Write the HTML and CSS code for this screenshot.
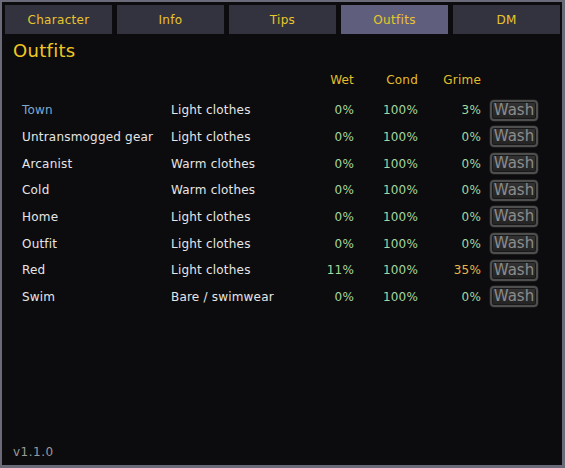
FILE: index.html
```html
<!DOCTYPE html>
<html>
<head>
<meta charset="utf-8">
<link rel="stylesheet" href="styles.css">
</head>
<body>
<div class="frame">
  <nav class="tabs">
    <div class="tab">Character</div>
    <div class="tab">Info</div>
    <div class="tab">Tips</div>
    <div class="tab active">Outfits</div>
    <div class="tab">DM</div>
  </nav>
  <h1 class="title">Outfits</h1>
  <div class="table">
    <div class="row head">
      <span></span><span></span>
      <span class="num">Wet</span><span class="num">Cond</span><span class="num">Grime</span><span></span>
    </div>
    <div class="row">
      <span class="name town">Town</span><span class="type">Light clothes</span>
      <span class="num val">0%</span><span class="num val">100%</span><span class="num val">3%</span><button class="wash">Wash</button>
    </div>
    <div class="row">
      <span class="name">Untransmogged gear</span><span class="type">Light clothes</span>
      <span class="num val">0%</span><span class="num val">100%</span><span class="num val">0%</span><button class="wash">Wash</button>
    </div>
    <div class="row">
      <span class="name">Arcanist</span><span class="type">Warm clothes</span>
      <span class="num val">0%</span><span class="num val">100%</span><span class="num val">0%</span><button class="wash">Wash</button>
    </div>
    <div class="row">
      <span class="name">Cold</span><span class="type">Warm clothes</span>
      <span class="num val">0%</span><span class="num val">100%</span><span class="num val">0%</span><button class="wash">Wash</button>
    </div>
    <div class="row">
      <span class="name">Home</span><span class="type">Light clothes</span>
      <span class="num val">0%</span><span class="num val">100%</span><span class="num val">0%</span><button class="wash">Wash</button>
    </div>
    <div class="row">
      <span class="name">Outfit</span><span class="type">Light clothes</span>
      <span class="num val">0%</span><span class="num val">100%</span><span class="num val">0%</span><button class="wash">Wash</button>
    </div>
    <div class="row">
      <span class="name">Red</span><span class="type">Light clothes</span>
      <span class="num val">11%</span><span class="num val">100%</span><span class="num warn">35%</span><button class="wash">Wash</button>
    </div>
    <div class="row">
      <span class="name">Swim</span><span class="type">Bare / swimwear</span>
      <span class="num val">0%</span><span class="num val">100%</span><span class="num val">0%</span><button class="wash">Wash</button>
    </div>
  </div>
  <div class="version">v1.1.0</div>
</div>
</body>
</html>
```
FILE: styles.css
```css
html, body {
  margin: 0;
  padding: 0;
  background: #6a6a78;
}
body {
  width: 565px;
  height: 468px;
  font-family: "DejaVu Sans", Verdana, sans-serif;
}
.frame {
  box-sizing: border-box;
  margin: 2px 3px 3px 2px;
  width: 560px;
  height: 463px;
  background: #0c0c0e;
  padding: 3px 3px 0 3px;
  display: flex;
  flex-direction: column;
}
.tabs {
  display: grid;
  grid-template-columns: repeat(5, 107px);
  gap: 5px;
}
.tab {
  height: 29px;
  background: #33333f;
  color: #e9c52c;
  font-size: 12px;
  display: flex;
  align-items: center;
  justify-content: center;
  letter-spacing: 0.3px;
}
.tab.active {
  background: #5f5f7d;
}
.title {
  margin: 7px 0 0 8px;
  font-size: 18px;
  font-weight: normal;
  color: #f0c722;
  line-height: 20px;
  letter-spacing: 0.3px;
}
.table {
  margin-top: 9px;
  padding-left: 17px;
}
.row {
  display: grid;
  grid-template-columns: 149px 150px 33px 64px 63px 48px;
  column-gap: 0;
  align-items: center;
  height: 26.65px;
  font-size: 12px;
  letter-spacing: 0.2px;
}
.row.head {
  height: 20px;
  margin-bottom: 7px;
  color: #e2bf2a;
}
.name { color: #e6e6e6; }
.name.town { color: #7ea9cf; }
.type { color: #e6e6e6; }
.num { text-align: right; }
.val { color: #a3d99f; }
.warn { color: #eab84b; }
.wash {
  margin-left: 9px;
  grid-column: 6;
  width: 48px;
  height: 21px;
  box-sizing: border-box;
  padding: 0;
  border: 2px solid #4e4e4e;
  border-radius: 4px;
  background: linear-gradient(#333333, #232323);
  box-shadow: inset 0 0 0 1px #191919, 0 0 0 0.5px #2a2a2a;
  color: #8c8c8c;
  font-family: "DejaVu Sans", Verdana, sans-serif;
  font-size: 15px;
  line-height: 17px;
  letter-spacing: 0;
}
.version {
  margin-top: auto;
  margin-left: 8px;
  margin-bottom: 6px;
  color: #9a9a9a;
  font-size: 12px;
  letter-spacing: 0.5px;
}
```
